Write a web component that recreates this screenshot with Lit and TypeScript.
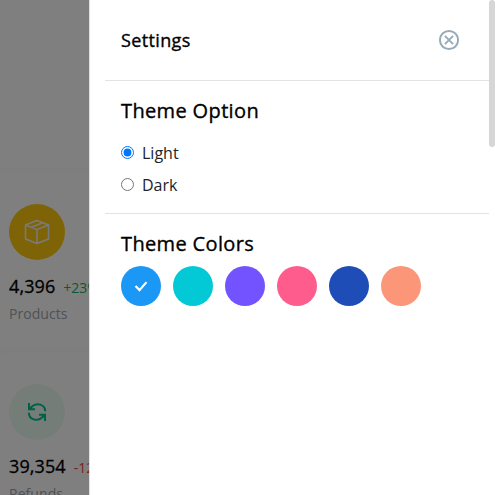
import { LitElement, html, css, svg } from "lit";
import { customElement, property, state } from "lit/decorators.js";

@customElement("stat-card")
class StatCard extends LitElement {
  @property() icon = "";
  @property() amount = "";
  @property() change = "";
  @property() label = "";
  static styles = css`
    :host { display: block; box-sizing: border-box; height: 174px; padding: 31px 9px 0; background: #fff; border-radius: 8px; white-space: nowrap; }
    .badge { width: 56px; height: 56px; border-radius: 50%; display: flex; align-items: center; justify-content: center; }
    .box { background: #fec90f; color: #f4f4f4; }
    .refresh { background: #ebfaf2; color: #00c292; }
    .row { display: flex; align-items: baseline; gap: 8px; margin-top: 14px; height: 24px; line-height: 24px; }
    .amount { font-size: 18px; color: #000; -webkit-text-stroke: 0.3px #000; letter-spacing: 0.1px; }
    .change { font-size: 14px; color: #1fb05a; }
    .down { color: #f0414a; }
    .label { font-size: 14px; line-height: 20px; color: #a0a4aa; margin-top: 6px; letter-spacing: 0.05px; }
    svg { display: block; }
  `;
  render() {
    const box = svg`<svg width="28" height="28" viewBox="0 0 28 28" fill="none" stroke="currentColor" stroke-width="1.5" stroke-linejoin="round"><path d="M14 2.500 25.500 7v14L14 25.500 2.500 21V7ZM2.500 7 14 11.600 25.500 7M14 11.600v13.900M8.300 9.300 19.700 4.700"/></svg>`;
    const refresh = svg`<svg width="22" height="22" viewBox="0 0 22 22" fill="none" stroke="currentColor" stroke-width="2"><path d="M3 2v6.200h6M3.500 7.700 6 5.400C10.500 1.200 19.200 3.300 19.200 10.200M19 20v-6.200h-6M18.500 14.300 16 16.600C11.500 20.800 2.800 18.700 2.800 11.800"/></svg>`;
    const isBox = this.icon === "box";
    return html`<div class="badge ${this.icon}">${isBox ? box : refresh}</div>
      <div class="row"><span class="amount">${this.amount}</span><span class="change ${isBox ? "" : "down"}">${this.change}</span></div>
      <div class="label">${this.label}</div>`;
  }
}

@customElement("app-root")
class AppRoot extends LitElement {
  @state() theme = "Light";
  @state() color = 0;
  static colors = ["#1b97f5", "#03c9d7", "#7352ff", "#ff5c8e", "#1e4db7", "#fb9678"];
  static styles = css`
    :host { display: block; position: relative; width: 495px; height: 495px; overflow: hidden; font-family: "Open Sans", sans-serif; background: #fff; }
    .page { display: flex; flex-direction: column; gap: 6px; background: #fcfcfc; }
    .spacer { height: 168px; background: #fff; margin-bottom: -1px; }
    .overlay { position: absolute; inset: 0; background: rgba(0, 0, 0, 0.5); }
    .panel { position: absolute; inset: 0 0 0 89px; box-sizing: border-box; background: #fff; border-left: 1px solid #e0e0e0; padding-left: 15px; display: flex; }
    .content { flex: 1; }
    .track { width: 6px; }
    .thumb { height: 147px; border-radius: 3px; background: #d6d6d6; }
    header { height: 80px; display: flex; align-items: center; justify-content: space-between; padding: 0 29px 0 16px; }
    h1, h2 { margin: 0; font-weight: 400; color: #000; -webkit-text-stroke: 0.35px #000; }
    h1 { font-size: 18px; line-height: 24px; letter-spacing: 0.36px; }
    h2 { font-size: 20px; line-height: 24px; letter-spacing: 0.36px; }
    section { border-top: 1px solid #e3e3e3; padding: 18px 15px 0 16px; box-sizing: border-box; }
    .options { height: 133px; }
    .list { margin-top: 13px; }
    label { display: flex; align-items: center; height: 32px; font-size: 16px; color: #212529; }
    label span { padding-top: 2px; }
    input { margin: 0 8px 0 0; width: 13px; height: 13px; }
    .swatches { display: flex; gap: 12px; margin-top: 10px; }
    .swatch { width: 40px; height: 40px; padding: 0; border: 0; border-radius: 50%; display: flex; align-items: center; justify-content: center; }
    svg { display: block; }
  `;
  render() {
    return html`
      <main class="page">
        <div class="spacer"></div>
        <stat-card icon="box" amount="4,396" change="+23%" label="Products"></stat-card>
        <stat-card icon="refresh" amount="39,354" change="-12%" label="Refunds"></stat-card>
      </main>
      <div class="overlay"></div>
      <aside class="panel">
        <div class="content">
          <header>
            <h1>Settings</h1>
            <svg width="22" height="22" viewBox="0 0 22 22" fill="none" stroke="#98abb8" stroke-width="2"><circle cx="11" cy="11" r="9.100"/><path d="m6.900 6.900 8.200 8.200m0-8.200-8.200 8.200"/></svg>
          </header>
          <section class="options">
            <h2>Theme Option</h2>
            <div class="list">
              ${["Light", "Dark"].map((t) => html`<label><input type="radio" name="theme" .checked=${this.theme === t} @change=${() => (this.theme = t)} /><span>${t}</span></label>`)}
            </div>
          </section>
          <section>
            <h2>Theme Colors</h2>
            <div class="swatches">
              ${AppRoot.colors.map((c, i) => html`<button class="swatch" style="background:${c}" @click=${() => (this.color = i)}>
                ${this.color === i ? svg`<svg width="16" height="16" viewBox="0 0 16 16" fill="none" stroke="#fff" stroke-width="2.2"><path d="m2.500 8 4 4.100 7-8"/></svg>` : ""}
              </button>`)}
            </div>
          </section>
        </div>
        <div class="track"><div class="thumb"></div></div>
      </aside>`;
  }
}
